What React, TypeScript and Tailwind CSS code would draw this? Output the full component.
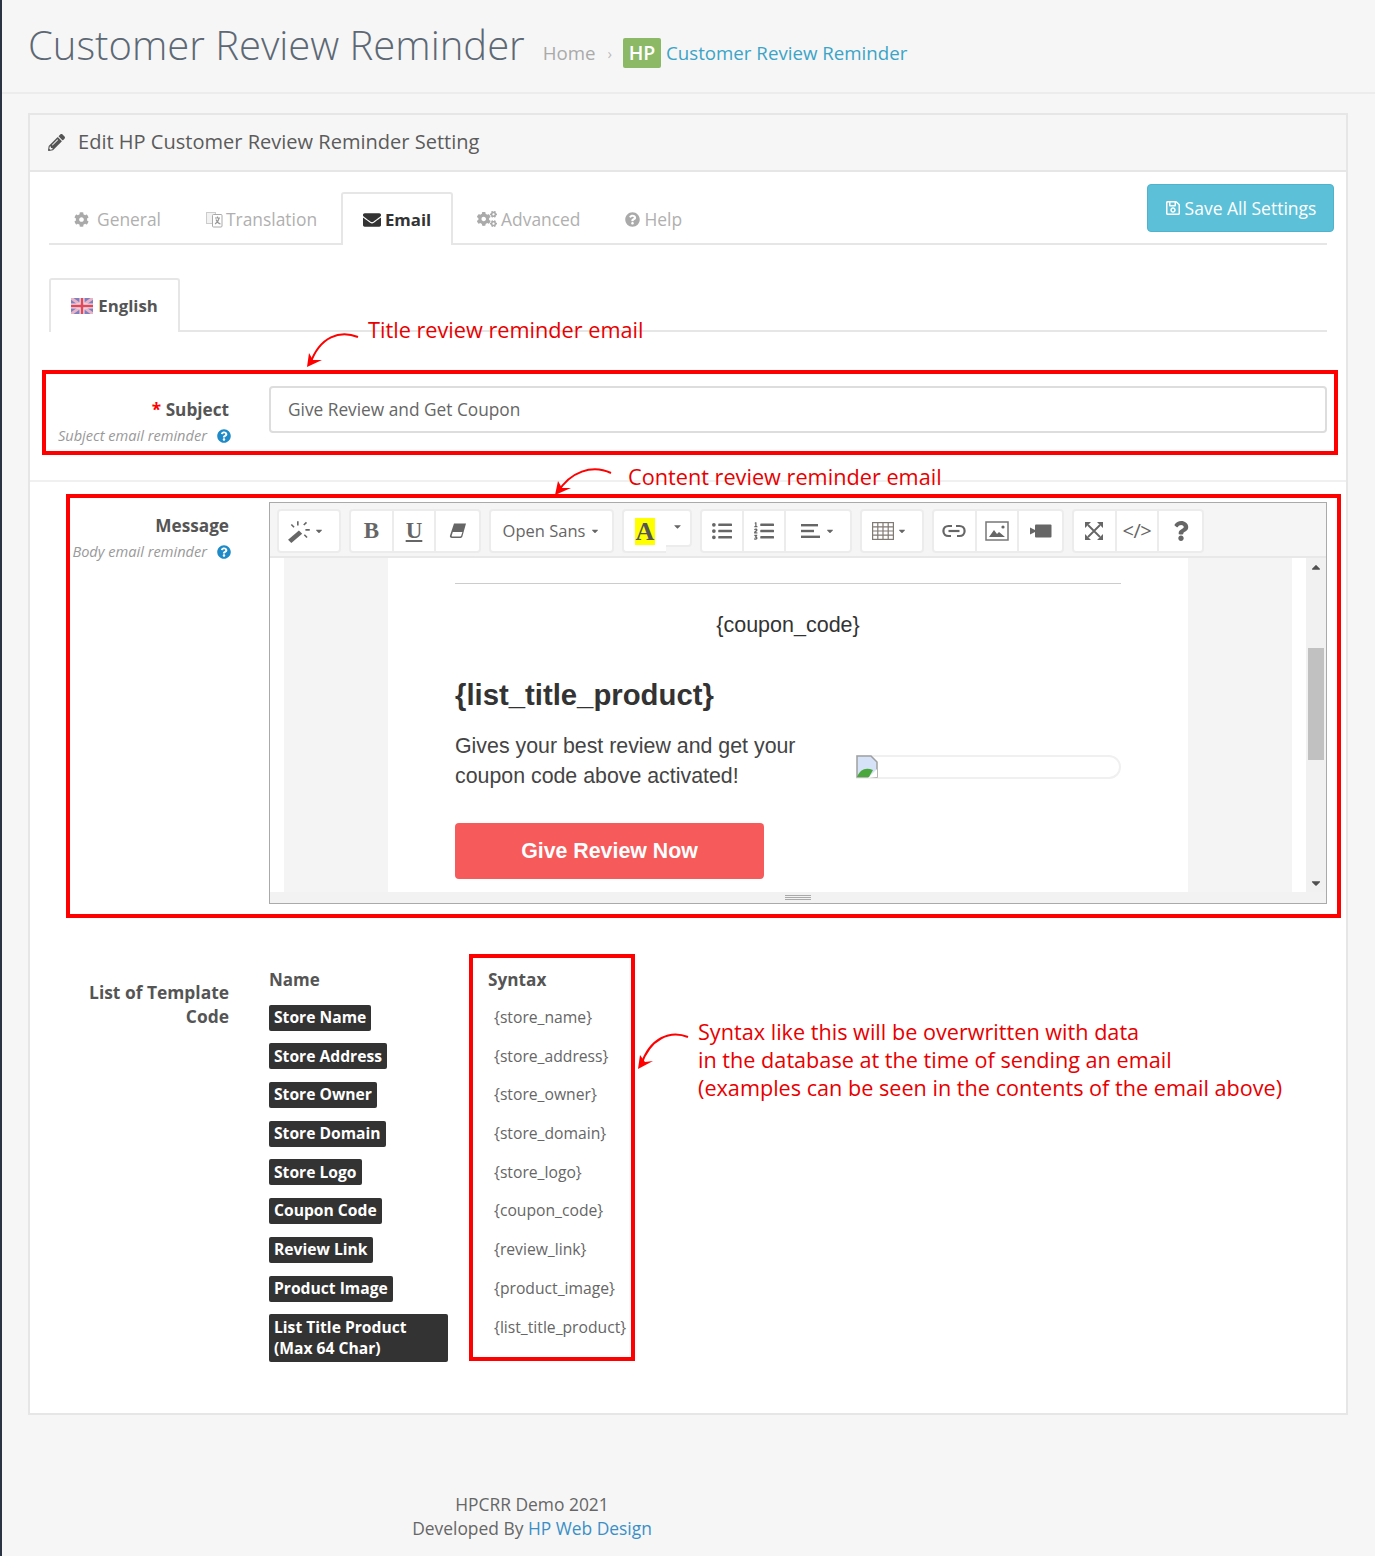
import { FaCog, FaCogs, FaEnvelope, FaListOl, FaListUl, FaPencilAlt, FaQuestion, FaQuestionCircle, FaRegSave, FaCaretDown, FaCaretUp } from 'react-icons/fa';

const tagRows = [
  { name: 'Store Name', syntax: '{store_name}' },
  { name: 'Store Address', syntax: '{store_address}' },
  { name: 'Store Owner', syntax: '{store_owner}' },
  { name: 'Store Domain', syntax: '{store_domain}' },
  { name: 'Store Logo', syntax: '{store_logo}' },
  { name: 'Coupon Code', syntax: '{coupon_code}' },
  { name: 'Review Link', syntax: '{review_link}' },
  { name: 'Product Image', syntax: '{product_image}' },
];

function Flag() {
  return (
    <svg width="22" height="16" viewBox="0 0 22 16" className="shrink-0">
      <rect width="22" height="16" fill="#7f7fc0" />
      <path d="M0 0L22 16M22 0L0 16" stroke="#eab4c4" strokeWidth="3" />
      <path d="M11 0V16M0 8H22" stroke="#f6dfe4" strokeWidth="5" />
      <path d="M11 0V16M0 8H22" stroke="#e0485c" strokeWidth="2.5" />
    </svg>
  );
}

function TranslationIcon() {
  return (
    <svg width="17" height="17" viewBox="0 0 17 17" className="shrink-0">
      <rect x="0.5" y="1.5" width="9" height="11" fill="#f2f2f2" stroke="#ccc" />
      <rect x="6.5" y="3.5" width="9.5" height="12.5" rx="1" fill="#fff" stroke="#aaa" />
      <path d="M9 7H14M11.5 5.5V7M13 7C12.5 10 11 12 9 13M10 8.5C11 11 12.5 12.5 14.5 13" stroke="#999" strokeWidth="1.2" fill="none" />
    </svg>
  );
}

function WandIcon() {
  return (
    <svg width="26" height="26" viewBox="0 0 24 24" className="text-[#666] -ml-[8px]">
      <path d="M1 20L11 11.5L14 14.5L4 23Z" fill="currentColor" />
      <path d="M10 3V7M4 6L6.5 8.5M18 4L15.5 6.5M17 11H21M16 15.5L18.5 18" stroke="currentColor" strokeWidth="1.5" fill="none" />
    </svg>
  );
}

function EraserIcon() {
  return (
    <svg width="18" height="16" viewBox="0 0 18 16">
      <path d="M5 0.5H17L13.5 13C13.2 14.4 12.3 15 11 15H3C1.4 15 0.5 14 1 12.5Z" fill="#666" />
      <path d="M3.8 9H13.4L12.2 12.8C12 13.2 11.7 13.4 11.2 13.4H3.4C2.8 13.4 2.5 13 2.7 12.4Z" fill="#fff" />
    </svg>
  );
}

function AlignIcon() {
  return (
    <svg width="20" height="16" viewBox="0 0 20 16" fill="#666">
      <rect y="1" width="17" height="2.4" />
      <rect y="6.8" width="13" height="2.4" />
      <rect y="12.6" width="19" height="2.4" />
    </svg>
  );
}

function TableIcon() {
  return (
    <svg width="22" height="18" viewBox="0 0 22 18" fill="none" stroke="#807a74" strokeWidth="1.2" className="-ml-[5px]">
      <rect x="0.6" y="0.6" width="20.8" height="16.8" />
      <path d="M5.8 1V17M11 1V17M16.2 1V17M1 4.8H21M1 9H21M1 13.2H21" />
    </svg>
  );
}

function LinkIcon() {
  return (
    <svg width="24" height="14" viewBox="0 0 24 14" fill="none" stroke="#666" strokeWidth="2.2">
      <path d="M10 2H6.5C3.5 2 1.4 4 1.4 7C1.4 10 3.5 12 6.5 12H9" />
      <path d="M14 2H17.5C20.5 2 22.6 4 22.6 7C22.6 10 20.5 12 17.5 12H15" />
      <path d="M6.5 7H17.5" />
    </svg>
  );
}

function ImageIcon() {
  return (
    <svg width="24" height="20" viewBox="0 0 24 20">
      <rect x="1" y="1" width="22" height="18" fill="#fff" stroke="#777" strokeWidth="1.5" />
      <path d="M4 16L9 9L12 13L14 11L20 16Z" fill="#666" />
      <circle cx="18" cy="6" r="1.6" fill="#666" />
    </svg>
  );
}

function VideoIcon() {
  return (
    <svg width="22" height="14" viewBox="0 0 22 14" fill="#666">
      <path d="M0 3.5L5 6V8L0 10.5Z" />
      <rect x="5" y="0.5" width="16.5" height="13" rx="1" />
    </svg>
  );
}

function FullscreenIcon() {
  return (
    <svg width="20" height="20" viewBox="0 0 20 20" fill="#666">
      <path d="M4 4L16 16M16 4L4 16" stroke="#666" strokeWidth="1.8" />
      <path d="M1 1H7L1 7ZM19 1V7L13 1ZM1 19V13L7 19ZM19 19H13L19 13Z" />
    </svg>
  );
}

function Btn({ children, w = 42.67 }: { children: React.ReactNode; w?: number }) {
  return (
    <div
      className="h-[40px] flex items-center justify-center text-[#666] border-r-2 border-[#ececec] last:border-r-0"
      style={{ width: w }}
    >
      {children}
    </div>
  );
}

function Group({ children }: { children: React.ReactNode }) {
  return <div className="flex bg-white border-2 border-[#ececec] rounded-[4px] h-[44px] items-center">{children}</div>;
}

function Toolbar() {
  return (
    <div className="h-[55px] pt-[3px] bg-[#f5f5f5] border-b-2 border-[#e8e8e8] flex items-center gap-[8px] pl-[7px]">
      <Group>
        <Btn w={60}>
          <WandIcon />
          <FaCaretDown className="size-[10px] ml-[1px]" />
        </Btn>
      </Group>
      <Group>
        <Btn><span className="font-['Liberation_Serif',serif] font-bold text-[23px]">B</span></Btn>
        <Btn><span className="font-['Liberation_Serif',serif] font-bold text-[23px] underline">U</span></Btn>
        <Btn><EraserIcon /></Btn>
      </Group>
      <Group>
        <Btn w={121}>
          <span className="text-[16.5px]">Open Sans</span>
          <FaCaretDown className="size-[10px] ml-[5px]" />
        </Btn>
      </Group>
      <div className="flex items-start h-[44px]">
        <div className="flex bg-white border-2 border-r-0 border-[#ececec] rounded-l-[4px] h-[44px] items-center">
          <Btn w={42}>
            <span className="bg-[#ffff00] font-['Liberation_Serif',serif] font-bold text-[26px] leading-[27px] px-[1px] text-[#555]">A</span>
          </Btn>
        </div>
        <div className="w-[26px] h-[38px] bg-white border-2 border-l-0 border-[#ececec] rounded-r-[4px] flex items-center justify-center text-[#666]">
          <FaCaretDown className="size-[11px] -mt-[4px]" />
        </div>
      </div>
      <Group>
        <Btn w={42}><FaListUl className="size-[20px]" /></Btn>
        <Btn w={42}><FaListOl className="size-[20px]" /></Btn>
        <Btn w={64}>
          <AlignIcon />
          <FaCaretDown className="size-[10px] ml-[4px]" />
        </Btn>
      </Group>
      <Group>
        <Btn w={60}>
          <TableIcon />
          <FaCaretDown className="size-[10px] ml-[3px]" />
        </Btn>
      </Group>
      <Group>
        <Btn><LinkIcon /></Btn>
        <Btn><ImageIcon /></Btn>
        <Btn><VideoIcon /></Btn>
      </Group>
      <Group>
        <Btn><FullscreenIcon /></Btn>
        <Btn><span className="text-[20px] tracking-[-0.5px]">&lt;/&gt;</span></Btn>
        <Btn><FaQuestion className="size-[20px]" /></Btn>
      </Group>
    </div>
  );
}

function BrokenImage() {
  return (
    <svg width="22" height="23" viewBox="0 0 22 23" className="shrink-0">
      <path d="M1 1H15L21 7V22H1Z" fill="#d5e2f7" stroke="#a0a0a0" strokeWidth="1.5" />
      <path d="M1 22C4 14 10 12 17 15L13 22Z" fill="#4aa73c" />
      <path d="M12 23L21 14V22Z" fill="#fff" />
    </svg>
  );
}

function EmailPreview() {
  return (
    <div className="relative flex h-[334px] overflow-hidden">
      <div className="w-[14px] bg-white" />
      <div className="flex-1 bg-[#f4f4f4] flex justify-center">
        <div className="w-[800px] bg-white px-[67px] font-['Liberation_Sans',Arial,sans-serif] text-[#333]">
          <div className="mt-[25px] border-t border-[#ccc]" />
          <div className="mt-[26px] text-center text-[21.5px] leading-[30px]">{'{coupon_code}'}</div>
          <div className="mt-[37px] font-bold text-[29.3px] leading-[36px]">{'{list_title_product}'}</div>
          <div className="mt-[19px] flex items-center">
            <div className="w-[401px] text-[21.35px] leading-[29.5px] shrink-0 text-[#444]">
              Gives your best review and get your
              <br />
              coupon code above activated!
            </div>
            <div className="flex-1 mt-[10px] h-[24px] border-2 border-[#f0f0f0] rounded-[12px] border-l-0 rounded-l-none flex items-center">
              <BrokenImage />
            </div>
          </div>
          <div className="mt-[32px] w-[309px] h-[56px] rounded-[4px] bg-[#f65a5a] text-white font-bold text-[21.35px] flex items-center justify-center">
            Give Review Now
          </div>
        </div>
      </div>
      <div className="w-[14px] bg-white" />
      <div className="w-[20px] bg-[#f1f1f1] relative flex flex-col items-center justify-between py-[2px] text-[#505050]">
        <FaCaretUp className="size-[14px]" />
        <div className="absolute top-[90px] left-[2px] w-[16px] h-[112px] bg-[#c1c1c1]" />
        <FaCaretDown className="size-[14px]" />
      </div>
    </div>
  );
}

function Annotations() {
  return (
    <>
      <div className="absolute left-[42px] top-[370px] w-[1296px] h-[85px] border-4 border-[#f00]" />
      <div className="absolute left-[66px] top-[494px] w-[1275px] h-[424px] border-4 border-[#f00]" />
      <div className="absolute left-[469px] top-[954px] w-[166px] h-[407px] border-4 border-[#f00]" />
      <div className="absolute left-[368px] top-[315px] text-[21.7px] leading-[30px] text-[#e80000] whitespace-nowrap">Title review reminder email</div>
      <div className="absolute left-[628px] top-[462px] text-[21.7px] leading-[30px] text-[#e80000] whitespace-nowrap">Content review reminder email</div>
      <div className="absolute left-[698px] top-[1018px] text-[21.65px] leading-[28px] text-[#e80000] whitespace-nowrap">
        Syntax like this will be overwritten with data
        <br />
        in the database at the time of sending an email
        <br />
        (examples can be seen in the contents of the email above)
      </div>
      <svg className="absolute left-0 top-0 pointer-events-none" width="1375" height="1556" fill="none">
        <path d="M358 337C340 330 320 336 310 364" stroke="#f00" strokeWidth="2" />
        <path d="M307 367L309 353L313 360L322 360Z" fill="#f00" />
        <path d="M611 473C592 464 570 472 558 492" stroke="#f00" strokeWidth="2" />
        <path d="M555 495L558 481L562 488L571 488Z" fill="#f00" />
        <path d="M688 1037C670 1030 650 1038 641 1065" stroke="#f00" strokeWidth="2" />
        <path d="M638 1069L640 1055L645 1062L653 1061Z" fill="#f00" />
      </svg>
    </>
  );
}

export default function App() {
  return (
    <div className="relative w-[1375px] h-[1556px] overflow-hidden bg-[#f6f6f6] border-l-2 border-[#2b3442] font-['Open_Sans',sans-serif] text-[16px] text-[#666]">
      <header className="h-[94px] border-b-2 border-[#ececec] flex items-center pl-[26px]">
        <h1 className="font-light text-[40px] leading-[48px] text-[#5d6875] -mt-[2px]">Customer Review Reminder</h1>
        <nav className="flex items-center ml-[18px] mt-[14px]">
          <span className="text-[#aaa] text-[18.7px]">Home</span>
          <span className="text-[#bbb] text-[15px] ml-[12px] mr-[11px]">›</span>
          <span className="w-[38px] h-[30px] rounded-[2px] bg-[#8cb966] text-white font-semibold text-[19.5px] flex items-center justify-center">HP</span>
          <span className="text-[#3ba4c7] text-[18.7px] ml-[5px]">Customer Review Reminder</span>
        </nav>
      </header>

      <section className="ml-[26px] mt-[19px] w-[1320px] h-[1302px] border-2 border-[#e6e6e6]">
        <div className="h-[57px] border-b-2 border-[#e6e6e6] flex items-center pl-[18px] text-[20.05px] text-[#5b5b5b]">
          <FaPencilAlt className="size-[17px] mr-[13px] text-[#555]" />
          Edit HP Customer Review Reminder Setting
        </div>

        <div className="relative bg-white h-[1241px] px-[19px] pt-[20px]">
          <button className="absolute right-[12px] top-[12px] w-[187px] h-[48px] bg-[#5bc0d8] border border-[#4fb3cd] rounded-[4px] text-white text-[17.5px] flex items-center justify-center gap-[4px]">
            <FaRegSave className="size-[16px]" />
            Save All Settings
          </button>

          <div className="w-[1278px] h-[53px] border-b-2 border-[#e6e6e6] flex text-[17.4px] text-[#b0b0b0]">
            <div className="flex items-center gap-[8px] ml-[25px] h-[53px] pt-[1px]">
              <FaCog className="size-[15px] text-[#aaa]" /> General
            </div>
            <div className="flex items-center gap-[3px] ml-[45px] h-[53px] pt-[1px]">
              <TranslationIcon /> Translation
            </div>
            <div className="ml-[24px] w-[112px] h-[53px] bg-white border-2 border-b-0 border-[#e6e6e6] rounded-t-[3px] flex items-center justify-center gap-[4px] font-bold text-[16.8px] text-[#333]">
              <FaEnvelope className="size-[18px]" /> Email
            </div>
            <div className="flex items-center gap-[4px] ml-[24px] h-[53px] pt-[1px]">
              <FaCogs className="size-[20px] text-[#aaa]" /> Advanced
            </div>
            <div className="flex items-center gap-[4px] ml-[45px] h-[53px] pt-[1px]">
              <FaQuestionCircle className="size-[15px] text-[#aaa]" /> Help
            </div>
          </div>

          <div className="mt-[33px] w-[1278px] h-[54px] border-b-2 border-[#e6e6e6] flex">
            <div className="w-[131px] h-[54px] bg-white border-2 border-b-0 border-[#e6e6e6] rounded-t-[3px] flex items-center justify-center gap-[5px] font-bold text-[16.8px] text-[#555]">
              <Flag /> English
            </div>
          </div>

          <div className="-mx-[19px] px-[19px] mt-[54px] h-[96px] border-b-2 border-[#f0f0f0] flex">
            <div className="w-[180px] shrink-0 text-right pt-[12px]">
              <div className="font-bold text-[17.2px] leading-[24px] text-[#555]">
                <span className="text-[#f00]">* </span>Subject
              </div>
              <div className="mt-[1px] -mr-[2px] italic text-[14.6px] leading-[24px] text-[#999] whitespace-nowrap">
                Subject email reminder
                <FaQuestionCircle className="inline size-[14px] text-[#1f8ac8] ml-[10px] -mt-[2px]" />
              </div>
            </div>
            <div className="ml-[40px] w-[1058px] h-[47px] border-2 border-[#ddd] rounded-[4px] flex items-center pl-[17px] text-[17.3px] text-[#666]">
              Give Review and Get Coupon
            </div>
          </div>

          <div className="mt-[20px] flex">
            <div className="w-[180px] shrink-0 text-right pt-[12px]">
              <div className="font-bold text-[17.2px] leading-[24px] text-[#555]">Message</div>
              <div className="mt-[1px] -mr-[2px] italic text-[14.6px] leading-[24px] text-[#999] whitespace-nowrap">
                Body email reminder
                <FaQuestionCircle className="inline size-[14px] text-[#1f8ac8] ml-[10px] -mt-[2px]" />
              </div>
            </div>
            <div className="ml-[40px] w-[1058px] h-[402px] border border-[#aaa] bg-white">
              <Toolbar />
              <EmailPreview />
              <div className="h-[11px] bg-[#f2f2f2] flex flex-col items-center justify-center gap-[1px]">
                <div className="w-[26px] h-px bg-[#aaa]" />
                <div className="w-[26px] h-px bg-[#aaa]" />
                <div className="w-[26px] h-px bg-[#aaa]" />
              </div>
            </div>
          </div>

          <div className="mt-[62px] flex">
            <div className="w-[180px] shrink-0 text-right pt-[14px] font-bold text-[17.4px] leading-[24px] text-[#555]">
              List of Template
              <br />
              Code
            </div>
            <div className="ml-[40px] grid grid-cols-[219px_1fr] auto-rows-[38.7px] text-[15.7px]">
              <div className="font-bold text-[17px] leading-[24px] text-[#555] pt-[2px] h-[34px]">Name</div>
              <div className="font-bold text-[17.2px] leading-[24px] text-[#555] pt-[2px] h-[34px]">Syntax</div>
              {tagRows.map((row) => (
                <div key={row.name} className="contents">
                  <div>
                    <span className="inline-flex items-center h-[26px] px-[5px] rounded-[2px] bg-[#333] text-white font-bold text-[15.65px]">{row.name}</span>
                  </div>
                  <div className="pl-[6px] h-[26px] flex items-center text-[#666]">{row.syntax}</div>
                </div>
              ))}
              <div className="w-[179px] h-[48px] px-[5px] rounded-[2px] bg-[#333] text-white font-bold text-[15.65px] leading-[21.5px] flex items-center">
                <span>
                  List Title Product
                  <br />
                  (Max 64 Char)
                </span>
              </div>
              <div className="pl-[6px] h-[26px] pt-[1px] flex items-center text-[#666]">{'{list_title_product}'}</div>
            </div>
          </div>
        </div>
      </section>

      <footer className="mt-[77px] w-[1060px] text-center text-[17.4px] leading-[24px] text-[#666]">
        <div>HPCRR Demo 2021</div>
        <div>
          Developed By <span className="text-[#3a8fc7]">HP Web Design</span>
        </div>
      </footer>

      <div className="absolute -left-[2px] top-0">
        <Annotations />
      </div>
    </div>
  );
}
